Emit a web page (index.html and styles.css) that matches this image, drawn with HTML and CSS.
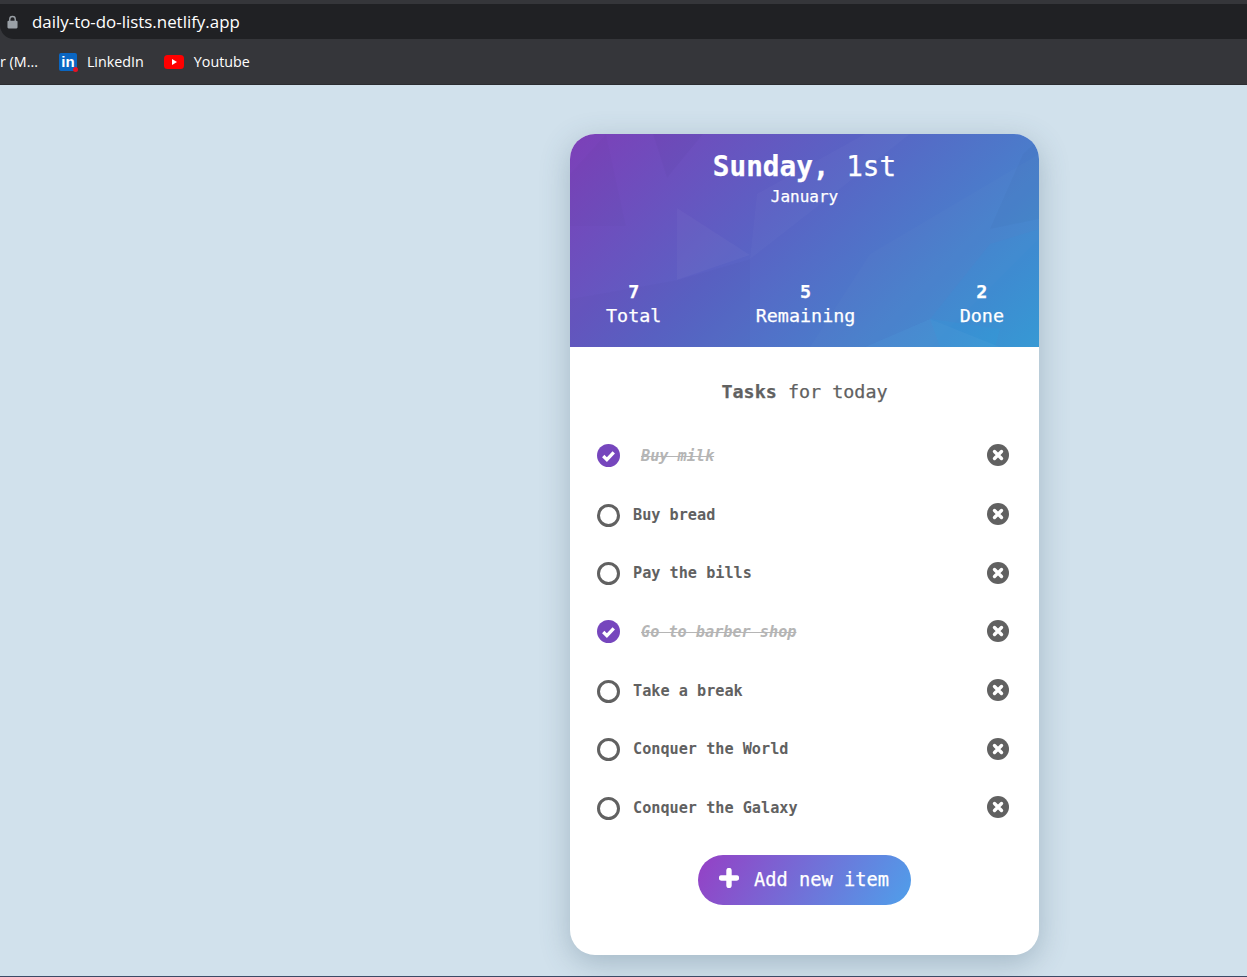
FILE: index.html
```html
<!DOCTYPE html>
<html lang="en">
<head>
    <meta charset="UTF-8">
    <meta name="viewport" content="width=device-width, initial-scale=1.0">
    <title>Daily to-do list</title>
    <link rel="stylesheet" href="styles.css">
</head>
<body>
    <div class="browser">
        <div class="url-row">
            <div class="url-bar">
                <svg class="lock" viewBox="0 0 12 14"><path d="M3 6V4a3 3 0 0 1 6 0v2" fill="none" stroke="#9aa0a6" stroke-width="1.5"/><rect x="0.5" y="5.5" width="11" height="8.5" rx="1.2" fill="#9aa0a6"/></svg>
                <span>daily-to-do-lists.netlify.app</span>
            </div>
        </div>
        <div class="bookmarks">
            <span class="bookmark cut">r (M...</span>
            <span class="bookmark">
                <span class="linkedin">in<i class="dot"></i></span>
                LinkedIn
            </span>
            <span class="bookmark">
                <svg class="youtube" viewBox="0 0 20 14"><rect width="20" height="14" rx="3.5" fill="#f00"/><path d="M8 4l5 3-5 3z" fill="#fff"/></svg>
                Youtube
            </span>
        </div>
    </div>

    <main class="page">
        <div class="card">
            <header class="card-head">
                <svg class="facets" viewBox="0 0 469 213" preserveAspectRatio="none">
                    <path d="M83 0H133L97 44z" fill="#000" fill-opacity=".02"/>
                    <path d="M36 0L56 92H0V40z" fill="#000" fill-opacity=".01"/>
                    <path d="M107 74L180 121L107 146z" fill="#fff" fill-opacity=".03"/>
                    <path d="M187 60L295 0H340L180 125z" fill="#fff" fill-opacity=".025"/>
                    <path d="M180 125L107 146L0 165V213H180z" fill="#000" fill-opacity=".01"/>
                    <path d="M300 120L469 20V105L360 213H240z" fill="#fff" fill-opacity=".015"/>
                    <path d="M453 20L469 5V85L420 95z" fill="#000" fill-opacity=".02"/>
                    <path d="M360 185L420 110L469 95V213H295z" fill="#0af" fill-opacity=".05"/>
                    <path d="M295 213L360 185L430 213z" fill="#fff" fill-opacity=".03"/>
                    <path d="M360 185L430 195L425 213H370z" fill="#0cf" fill-opacity=".06"/>
                </svg>
                <div class="date">
                    <h1>Sunday, <span class="day-num">1st</span></h1>
                    <p>January</p>
                </div>
                <div class="stats">
                    <div class="stat"><strong>7</strong><span>Total</span></div>
                    <div class="stat middle"><strong>5</strong><span>Remaining</span></div>
                    <div class="stat"><strong>2</strong><span>Done</span></div>
                </div>
            </header>

            <section class="tasks">
                <h2><b>Tasks</b> for today</h2>
                <ul class="task-list">
                    <li class="task done">
                        <svg class="check" viewBox="0 0 24 24"><circle cx="12" cy="12" r="12" fill="#7646bd"/><path d="M6.5 12.5l3.8 3.8 7.2-7.6" fill="none" stroke="#fff" stroke-width="3.4"/></svg>
                        <span class="name">Buy milk</span>
                        <svg class="remove" viewBox="0 0 22 22"><circle cx="11" cy="11" r="11" fill="#616161"/><path d="M7.5 7.5l7 7m0-7l-7 7" stroke="#fff" stroke-width="3.4" stroke-linecap="round"/></svg>
                    </li>
                    <li class="task">
                        <span class="circle"></span>
                        <span class="name">Buy bread</span>
                        <svg class="remove" viewBox="0 0 22 22"><circle cx="11" cy="11" r="11" fill="#616161"/><path d="M7.5 7.5l7 7m0-7l-7 7" stroke="#fff" stroke-width="3.4" stroke-linecap="round"/></svg>
                    </li>
                    <li class="task">
                        <span class="circle"></span>
                        <span class="name">Pay the bills</span>
                        <svg class="remove" viewBox="0 0 22 22"><circle cx="11" cy="11" r="11" fill="#616161"/><path d="M7.5 7.5l7 7m0-7l-7 7" stroke="#fff" stroke-width="3.4" stroke-linecap="round"/></svg>
                    </li>
                    <li class="task done">
                        <svg class="check" viewBox="0 0 24 24"><circle cx="12" cy="12" r="12" fill="#7646bd"/><path d="M6.5 12.5l3.8 3.8 7.2-7.6" fill="none" stroke="#fff" stroke-width="3.4"/></svg>
                        <span class="name">Go to barber shop</span>
                        <svg class="remove" viewBox="0 0 22 22"><circle cx="11" cy="11" r="11" fill="#616161"/><path d="M7.5 7.5l7 7m0-7l-7 7" stroke="#fff" stroke-width="3.4" stroke-linecap="round"/></svg>
                    </li>
                    <li class="task">
                        <span class="circle"></span>
                        <span class="name">Take a break</span>
                        <svg class="remove" viewBox="0 0 22 22"><circle cx="11" cy="11" r="11" fill="#616161"/><path d="M7.5 7.5l7 7m0-7l-7 7" stroke="#fff" stroke-width="3.4" stroke-linecap="round"/></svg>
                    </li>
                    <li class="task">
                        <span class="circle"></span>
                        <span class="name">Conquer the World</span>
                        <svg class="remove" viewBox="0 0 22 22"><circle cx="11" cy="11" r="11" fill="#616161"/><path d="M7.5 7.5l7 7m0-7l-7 7" stroke="#fff" stroke-width="3.4" stroke-linecap="round"/></svg>
                    </li>
                    <li class="task">
                        <span class="circle"></span>
                        <span class="name">Conquer the Galaxy</span>
                        <svg class="remove" viewBox="0 0 22 22"><circle cx="11" cy="11" r="11" fill="#616161"/><path d="M7.5 7.5l7 7m0-7l-7 7" stroke="#fff" stroke-width="3.4" stroke-linecap="round"/></svg>
                    </li>
                </ul>
                <button class="add-btn">
                    <svg class="plus" viewBox="0 0 20 20"><path d="M10 2.5v15M2.5 10h15" stroke="#fff" stroke-width="5.4" stroke-linecap="round"/></svg>
                    Add new item
                </button>
            </section>
        </div>
    </main>
</body>
</html>
```

FILE: styles.css
```css
* { box-sizing: border-box; }
html, body { height: 100%; }
body { margin: 0; background-color: #d1e1ec; font-family: "DejaVu Sans Mono", monospace; display: flex; flex-direction: column; overflow: hidden; border-bottom: 1px solid #3c4a66; }

.browser { height: 85px; flex: none; background-color: #35363a; border-bottom: 1px solid #2b2c30; font-family: "Open Sans", sans-serif; color: #fff; }
.url-row { height: 39px; padding-top: 4px; }
.url-bar { height: 35px; background-color: #202124; border-radius: 0 0 0 14px; display: flex; align-items: center; padding-left: 7px; font-size: 16.9px; gap: 14px; }
.lock { width: 11px; height: 14px; }
.bookmarks { height: 45px; display: flex; align-items: center; font-size: 14.3px; }
.bookmark { display: flex; align-items: center; gap: 10px; margin-right: 20px; }
.bookmark.cut { margin-right: 21px; }
.linkedin { position: relative; width: 18px; height: 18px; background-color: #0a66c2; border-radius: 2px; font: bold 15px/18px "Liberation Sans", sans-serif; text-align: center; color: #fff; }
.dot { position: absolute; right: -1px; bottom: -1px; width: 5px; height: 5px; border-radius: 50%; background-color: #e81123; }
.youtube { width: 20px; height: 14px; }

.page { flex: 1; padding: 49px 0 0 570px; }
.card { width: 469px; height: 821px; background: white; border-radius: 25px; overflow: hidden; box-shadow: 0 8px 30px rgba(60, 90, 110, 0.3); }
.card-head { position: relative; height: 213px; padding-top: 15px; display: flex; flex-direction: column; justify-content: space-between; background: linear-gradient(135deg, #7d3fb8 0%, #5a62c4 42%, #3a98d2 100%); color: white; text-align: center; -webkit-text-stroke: 0.25px white; }
.facets { position: absolute; inset: 0; width: 100%; height: 100%; }
.date, .stats { position: relative; }
.date h1 { margin: 0; font-size: 27.7px; line-height: 36px; font-weight: bold; }
.day-num { font-weight: normal; }
.date p { margin: 0; font-size: 16px; line-height: 24px; font-weight: normal; }
.stats { display: flex; justify-content: space-between; padding: 0 35px 19px 36px; }
.stat { display: flex; flex-direction: column; font-size: 18.4px; line-height: 24px; }
.stat strong { font-size: 18.4px; }
.stat.middle { margin-right: 10px; }

.tasks { padding: 30px 0 0; text-align: center; color: #616161; }
.tasks h2 { margin: 0; font-size: 18.4px; line-height: 30px; font-weight: normal; -webkit-text-stroke: 0.25px #616161; }
.task-list { list-style: none; margin: 19px 0 0; padding: 0 30px 0 27px; }
.task { height: 58.7px; display: flex; align-items: center; font-size: 15.2px; font-weight: bold; text-align: left; }
.circle { width: 23px; height: 23px; border: 3px solid #616161; border-radius: 50%; margin-top: 2px; }
.check { width: 23px; height: 23px; }
.name { margin: 1px 0 0 13px; flex: 1; }
.done .name { margin-left: 21px; color: #b5b5b5; font-style: italic; text-decoration: line-through; }
.remove { width: 22px; height: 22px; }

.add-btn { display: inline-flex; align-items: center; gap: 15px; width: 213px; height: 50px; margin-top: 18px; padding: 0 0 0 21px; border: none; border-radius: 25px; background: linear-gradient(120deg, #9540c5 0%, #4f9fea 100%); color: white; font-family: inherit; font-size: 18.7px; -webkit-text-stroke: 0.25px white; cursor: pointer; }
.plus { width: 20px; height: 20px; margin-top: -3px; }
```
